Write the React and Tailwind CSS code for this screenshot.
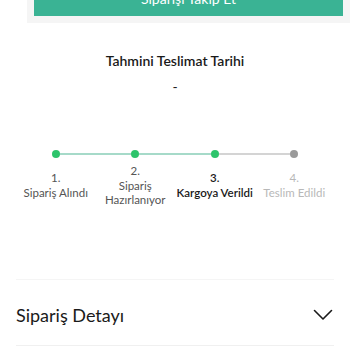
import React from "react";

const steps = [
  { n: "1.", label: ["Sipariş Alındı"], color: "text-[#555555]", left: "bg-transparent", right: "bg-[#a6dac9]", dot: "bg-[#2dc46b]" },
  { n: "2.", label: ["Sipariş", "Hazırlanıyor"], color: "text-[#555555]", left: "bg-[#a6dac9]", right: "bg-[#a6dac9]", dot: "bg-[#2dc46b]" },
  { n: "3.", label: ["Kargoya Verildi"], color: "text-[#1a1a1a] font-semibold", left: "bg-[#a6dac9]", right: "bg-[#d4d4d4]", dot: "bg-[#2dc46b]" },
  { n: "4.", label: ["Teslim Edildi"], color: "text-[#b8b8b8]", left: "bg-[#d4d4d4]", right: "bg-transparent", dot: "bg-[#9a9a9a]" },
];

export default function App() {
  return (
    <div className="w-[350px] h-[350px] overflow-hidden bg-white" style={{ fontFamily: "Lato, 'Noto Sans', sans-serif" }}>
      <div className="ml-[27px] bg-[#f5f5f5] px-[7px] pb-[7px]">
        <div className="-mt-[20px] h-[36px] bg-[#3ab394] flex items-center justify-center text-white text-[14px]">
          Siparişi Takip Et
        </div>
      </div>

      <div className="mt-[29px] text-center text-[14px] font-semibold text-[#1a1a1a] leading-[18px]">
        Tahmini Teslimat Tarihi
      </div>
      <div className="mt-[8px] text-center text-[14px] text-[#1a1a1a] leading-[18px]">-</div>

      <div className="mt-[54px] px-4">
        <div className="grid grid-cols-4">
          {steps.map((s, i) => (
            <div key={i} className="flex items-center h-[8px]">
              <div className={`flex-1 h-[1.5px] ${s.left}`} />
              <div className={`w-[8px] h-[8px] rounded-full ${s.dot}`} />
              <div className={`flex-1 h-[1.5px] ${s.right}`} />
            </div>
          ))}
        </div>
        <div className="grid grid-cols-4 items-center mt-[6px]">
          {steps.map((s, i) => (
            <div key={i} className={`text-center text-[11.5px] leading-[14.5px] ${s.color}`}>
              <div>{s.n}</div>
              {s.label.map((l, j) => (
                <div key={j} className="whitespace-nowrap">{l}</div>
              ))}
            </div>
          ))}
        </div>
      </div>

      <div className="mt-[71px] mx-4 border-t border-[#f5f5f5]" />
      <div className="mx-4 h-[65px] pt-[6px] flex items-center justify-between">
        <span className="text-[18px] text-[#1a1a1a]">Sipariş Detayı</span>
        <svg width="20" height="12" viewBox="0 0 20 12" fill="none" className="mr-[1px]">
          <path d="M1.5 1.5 L10 10 L18.5 1.5" stroke="#1a1a1a" strokeWidth="1.6" strokeLinecap="round" strokeLinejoin="round" />
        </svg>
      </div>
      <div className="mx-4 border-t border-[#f0f0f0]" />
    </div>
  );
}
